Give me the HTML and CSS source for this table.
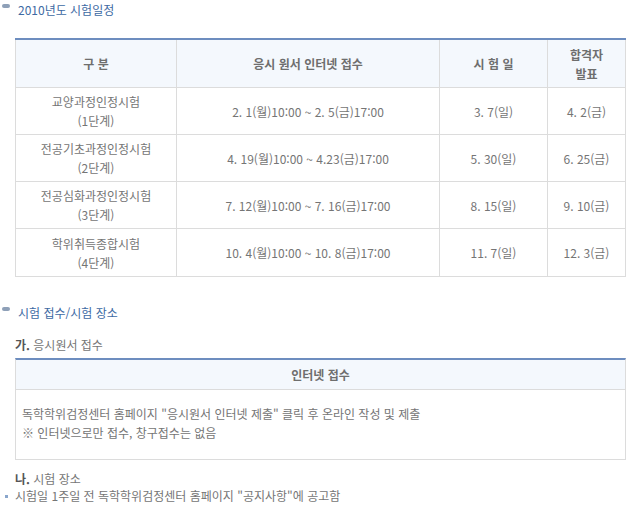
FILE: index.html
```html
<!DOCTYPE html>
<html lang="ko">
<head>
<meta charset="utf-8">
<link rel="stylesheet" href="styles.css">
</head>
<body>
<div class="page">
  <h2 class="sec-title"><span class="pill"></span>2010년도 시험일정</h2>
  <table class="sched">
    <colgroup>
      <col class="c1"><col class="c2"><col class="c3"><col class="c4">
    </colgroup>
    <thead>
      <tr><th>구 분</th><th>응시 원서 인터넷 접수</th><th>시 험 일</th><th>합격자<br>발표</th></tr>
    </thead>
    <tbody>
      <tr><td>교양과정인정시험<br>(1단계)</td><td>2. 1(월)10:00 ~ 2. 5(금)17:00</td><td>3. 7(일)</td><td>4. 2(금)</td></tr>
      <tr><td>전공기초과정인정시험<br>(2단계)</td><td>4. 19(월)10:00 ~ 4.23(금)17:00</td><td>5. 30(일)</td><td>6. 25(금)</td></tr>
      <tr><td>전공심화과정인정시험<br>(3단계)</td><td>7. 12(월)10:00 ~ 7. 16(금)17:00</td><td>8. 15(일)</td><td>9. 10(금)</td></tr>
      <tr class="last"><td>학위취득종합시험<br>(4단계)</td><td>10. 4(월)10:00 ~ 10. 8(금)17:00</td><td>11. 7(일)</td><td>12. 3(금)</td></tr>
    </tbody>
  </table>

  <h2 class="sec-title sec2"><span class="pill"></span>시험 접수/시험 장소</h2>
  <p class="sub"><b>가.</b> 응시원서 접수</p>
  <div class="box">
    <div class="box-head">인터넷 접수</div>
    <div class="box-body">
      <p>독학학위검정센터 홈페이지 "응시원서 인터넷 제출" 클릭 후 온라인 작성 및 제출</p>
      <p>※ 인터넷으로만 접수, 창구접수는 없음</p>
    </div>
  </div>
  <p class="sub sub2"><b>나.</b> 시험 장소</p>
  <ul class="bullets">
    <li>시험일 1주일 전 독학학위검정센터 홈페이지 "공지사항"에 공고함</li>
  </ul>
</div>
</body>
</html>
```

FILE: styles.css
```css
html, body {
  margin: 0;
  padding: 0;
  background: #fff;
}
body {
  font-family: "Noto Sans CJK KR", "Noto Sans", sans-serif;
  font-size: 12px;
  color: #6a6a6a;
}
.page {
  width: 632px;
}
.sec-title {
  margin: 0;
  height: 20px;
  line-height: 20px;
  font-size: 12px;
  font-weight: normal;
  color: #3d6aa3;
  display: flex;
  align-items: center;
  padding-left: 2px;
}
.pill {
  display: inline-block;
  width: 8px;
  height: 4px;
  border-radius: 2px;
  background: #8ea0b8;
  margin-right: 8px;
  position: relative;
  top: -4px;
}
.sched {
  margin: 18px 0 0 15px;
  border-collapse: collapse;
  width: 611px;
  border-top: 2px solid #6d8dbf;
}
.sched .c1 { width: 161px; }
.sched .c2 { width: 263px; }
.sched .c3 { width: 108px; }
.sched .c4 { width: 78px; }
.sched th, .sched td {
  border: 1px solid #dcdcdc;
  text-align: center;
  padding: 0;
  height: 46px;
  line-height: 19px;
}
.sched th {
  border-top: none;
  height: 47px;
  background: #f4f8fd;
  color: #6e6e6e;
  font-weight: bold;
}
.sched td {
  color: #757575;
}
.sched .last td {
  height: 47px;
}
.sec2 {
  margin-top: 26px;
}
.sub {
  margin: 12px 0 0 15px;
  line-height: 20px;
  color: #767676;
}
.sub b {
  color: #555;
}
.box {
  margin: 3px 0 0 15px;
  width: 609px;
  border: 1px solid #dcdcdc;
  border-top: 2px solid #6d8dbf;
}
.box-head {
  height: 29px;
  line-height: 29px;
  text-align: center;
  font-weight: bold;
  color: #6e6e6e;
  background: #f4f8fd;
  border-bottom: 1px solid #dcdcdc;
}
.box-body {
  height: 69px;
  padding: 14px 0 0 6px;
  box-sizing: border-box;
  color: #757575;
}
.box-body p {
  margin: 0;
  line-height: 19px;
}
.sub2 {
  margin-top: 9px;
}
.bullets {
  margin: -3px 0 0 0;
  padding: 0;
  list-style: none;
  color: #757575;
}
.bullets li {
  position: relative;
  padding-left: 15px;
  line-height: 20px;
}
.bullets li::before {
  content: "";
  position: absolute;
  left: 5px;
  top: 9px;
  width: 3px;
  height: 3px;
  background: #8aa6cc;
}
```
